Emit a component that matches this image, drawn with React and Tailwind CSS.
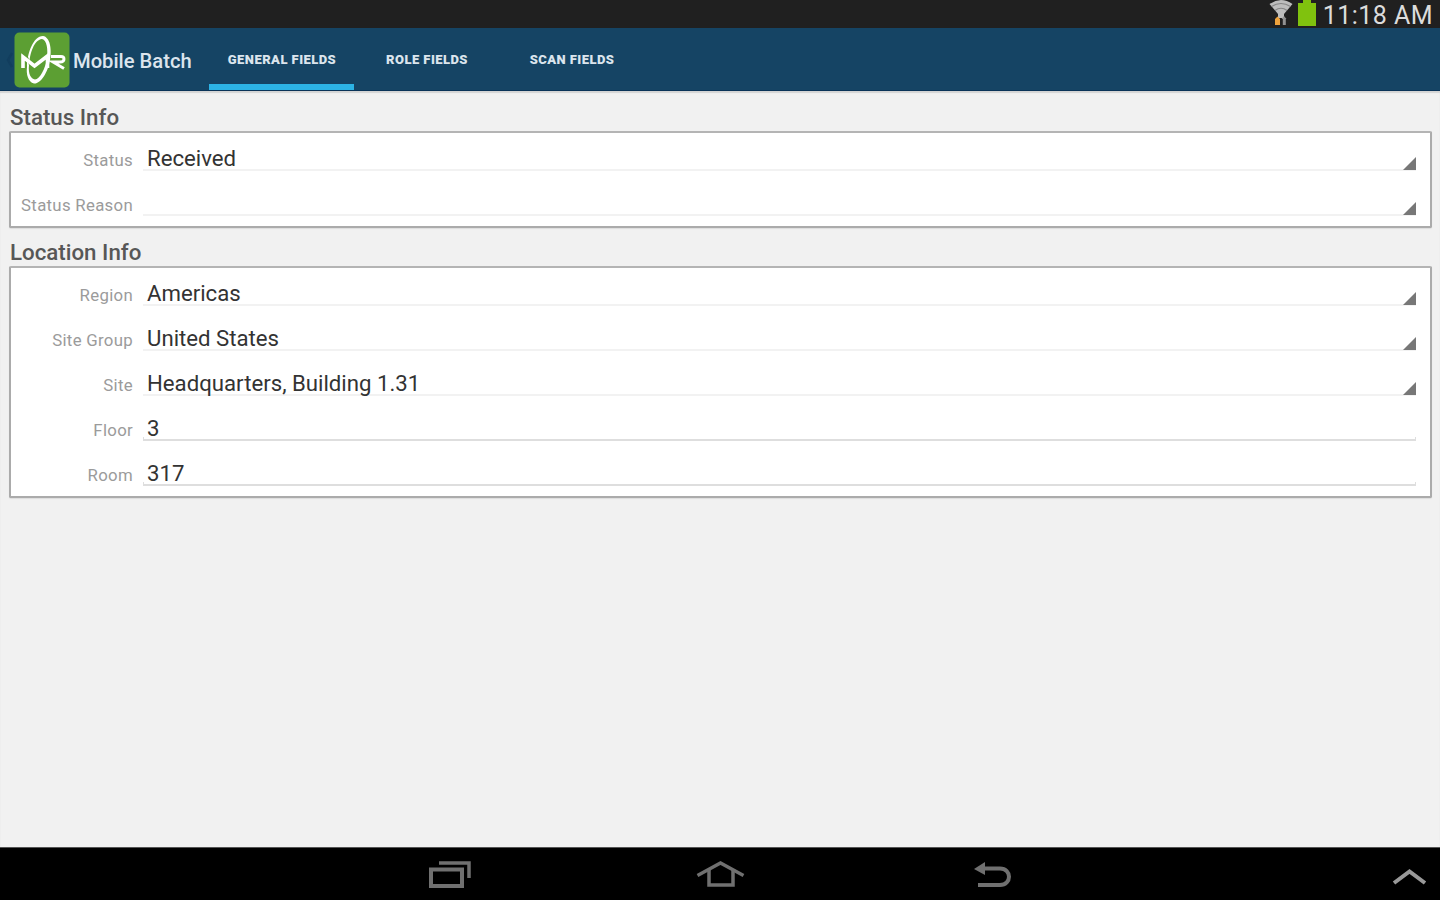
const TABS = [
  { label: 'GENERAL FIELDS', active: true },
  { label: 'ROLE FIELDS' },
  { label: 'SCAN FIELDS' },
];

const SECTIONS = [
  {
    title: 'Status Info',
    titleClass: 'h-[40px] pt-[13px]',
    fields: [
      { label: 'Status', value: 'Received', kind: 'spinner' },
      { label: 'Status Reason', value: '', kind: 'spinner' },
    ],
  },
  {
    title: 'Location Info',
    titleClass: 'h-[38px] pt-[11px]',
    fields: [
      { label: 'Region', value: 'Americas', kind: 'spinner' },
      { label: 'Site Group', value: 'United States', kind: 'spinner' },
      { label: 'Site', value: 'Headquarters, Building 1.31', kind: 'spinner' },
      { label: 'Floor', value: '3', kind: 'input' },
      { label: 'Room', value: '317', kind: 'input' },
    ],
  },
];

function StatusBar() {
  return (
    <div className="flex h-7 shrink-0 items-start justify-end bg-[#202020] pr-[7px]">
      <svg className="h-7 w-[24px]" viewBox="0 0 24 28">
        <path d="M0.500 4Q12 -4 23.500 4L15 14V18H9V14Z" fill="#bdbdbd" />
        <path d="M2.500 6.500Q12 0.500 21.500 6.500M6 10.500Q12 6 18 10.500" fill="none" stroke="#858585" strokeWidth="1.200" />
        <path d="M8.500 16.500L11 19V25H6V19Z" fill="#eea23c" />
        <path d="M15 16L17.500 19H16.800V25H13.800V19H12.500Z" fill="#929292" />
      </svg>
      <svg className="ml-[4px] h-7 w-[20px]" viewBox="0 0 20 28">
        <path d="M6 0H14V3H19V26H1V3H6Z" fill="#80c20e" />
      </svg>
      <span className="ml-[6px] mt-[2px] text-[25px] leading-[28px] tracking-[0.45px] text-[#dcdcdc]">11:18 AM</span>
    </div>
  );
}

function Logo() {
  return (
    <svg className="ml-px mt-[4px] h-[56px] w-[56px] shrink-0" viewBox="0 0 56 56">
      <rect x="0.500" y="0.500" width="55" height="55" rx="5" fill="#5c9f33" />
      <path
        fillRule="evenodd"
        fill="#fff"
        d="M29 4C36 5 38 17 36 28C34 40 27 52 20 51.500C14 50 12 42 13 35C13 22 19 4 29 4ZM28 7C20 8 16 21 15 33C14 42 17 47 21 47.500C26 47 31 37 33 27C34 17 33 8 28 7Z"
      />
      <path d="M12.500 23.500L16 33" stroke="#5c9f33" strokeWidth="2" />
      <g fill="none" stroke="#fff">
        <path d="M9 36V25L20.500 34L33.500 24V36" strokeWidth="3.600" />
        <path d="M37 24.500H47Q50 24.500 50 27Q50 30 46 30H39L50 36.500" strokeWidth="2.900" />
      </g>
    </svg>
  );
}

function ActionBar() {
  return (
    <header className="flex h-[63px] shrink-0 border-b border-[#0a3358] bg-[#154464]">
      <svg className="ml-[6px] mt-[24px] h-[16px] w-[7px] shrink-0" viewBox="0 0 7 16" fill="none" stroke="#123e5e" strokeWidth="2.500">
        <path d="M6 1L2 8L6 15" />
      </svg>
      <Logo />
      <h1 className="ml-[3px] w-[136px] shrink-0 whitespace-nowrap text-[20.200px] font-medium leading-[66px] text-[#dce5ed]">
        Mobile Batch
      </h1>
      <nav className="flex">
        {TABS.map((tab) => (
          <div
            key={tab.label}
            className={
              'flex h-[62px] w-[145px] justify-center whitespace-nowrap pl-px text-[13px] font-black leading-[64px] tracking-[0.45px] text-[#dbe5ed] ' +
              (tab.active ? 'border-b-[6px] border-[#2cb3e5]' : '')
            }
          >
            {tab.label}
          </div>
        ))}
      </nav>
    </header>
  );
}

function Field({ label, value, kind }) {
  return (
    <div className="flex h-[38px]">
      <div className="w-[122px] shrink-0 whitespace-nowrap pt-[15px] text-right text-[16.800px] leading-6 tracking-[0.3px] text-[#9b9b9b]">
        {label}
      </div>
      <div
        className={
          'relative ml-[10px] mr-[14px] flex-1 whitespace-nowrap pl-[4px] pt-[13px] text-[22.200px] leading-6 text-[#333] ' +
          (kind === 'spinner' ? 'border-b-2 border-[#f2f2f2]' : 'border-b-2 border-[#dedede]')
        }
      >
        {value}
        {kind === 'spinner' ? (
          <svg className="absolute -bottom-px right-0 h-[13px] w-[13px]" viewBox="0 0 13 13">
            <path d="M13 0V13H0Z" fill="#777" />
          </svg>
        ) : (
          <>
            <span className="absolute bottom-0 left-0 h-[2px] w-px bg-[#dedede]" />
            <span className="absolute bottom-0 right-0 h-[2px] w-px bg-[#dedede]" />
          </>
        )}
      </div>
    </div>
  );
}

function Section({ title, titleClass, fields }) {
  return (
    <section>
      <h2 className={'whitespace-nowrap pl-px text-[22.300px] font-medium leading-[27px] text-[#575757] ' + titleClass}>{title}</h2>
      <div className="flex flex-col gap-[7px] rounded-[2px] border-2 border-[#ababab] border-t-[#b4b4b4] bg-white pb-[10px] shadow-[0_1px_1px_#dddddd]">
        {fields.map((field) => (
          <Field key={field.label} {...field} />
        ))}
      </div>
    </section>
  );
}

function NavigationBar() {
  return (
    <footer className="flex h-[53px] shrink-0 items-start border-t border-[#555] bg-black">
      <svg className="ml-[428px] mt-[12px] h-[30px] w-[44px]" viewBox="0 0 44 30" fill="none" stroke="#707070" strokeWidth="4">
        <path d="M3 9.500H34V26H3Z" />
        <path d="M11 3H41V18" strokeWidth="3.500" />
      </svg>
      <svg className="ml-[224px] mt-[12px] h-[30px] w-[50px]" viewBox="0 0 50 30" fill="none" stroke="#707070" strokeWidth="3.500">
        <path d="M1.500 15.500L24.500 3L47.500 15.500" />
        <path d="M13 10V25H37V10" />
      </svg>
      <svg className="ml-[228px] mt-[13px] h-[30px] w-[38px]" viewBox="0 0 38 30" fill="none" stroke="#707070" strokeWidth="4">
        <path d="M8 7.500H26C38 7.500 38 24 26 24H4" />
        <path d="M0 8L11 1V14Z" fill="#707070" stroke="none" />
      </svg>
      <svg className="ml-[380px] mt-[19px] h-[20px] w-[36px]" viewBox="0 0 36 20" fill="none" stroke="#999" strokeWidth="4">
        <path d="M2 16L17.500 4.500L33 16" />
      </svg>
    </footer>
  );
}

export default function App() {
  return (
    <div className="flex h-[900px] w-[1440px] flex-col overflow-hidden bg-[#f1f1f1] font-[Roboto,sans-serif]">
      <StatusBar />
      <ActionBar />
      <main className="flex-1 pl-[9px] pr-[8px] shadow-[inset_0_2px_1px_#d4d4d4]">
        {SECTIONS.map((section) => (
          <Section key={section.title} {...section} />
        ))}
      </main>
      <NavigationBar />
    </div>
  );
}
